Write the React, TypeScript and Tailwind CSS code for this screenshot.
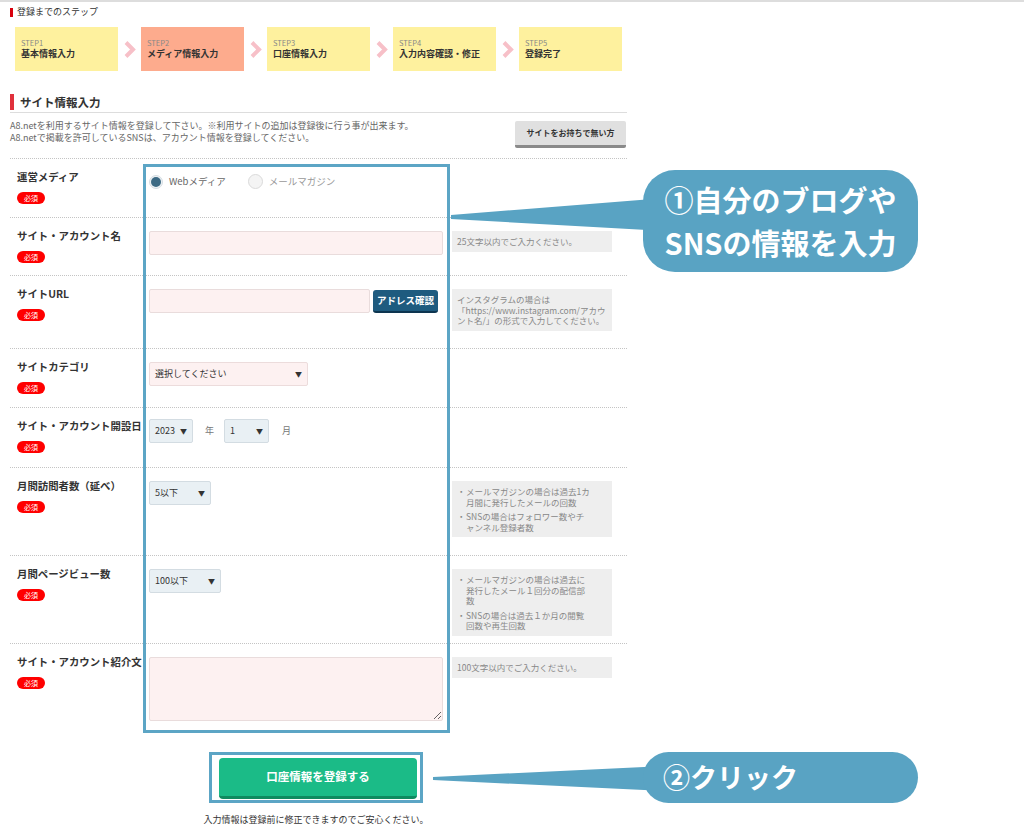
import React from "react";

const Badge = () => (
  <div className="mt-[7px] flex h-[12px] w-[28px] items-center justify-center rounded-full bg-[#ff0000] text-[7px] leading-none text-white">
    必須
  </div>
);

function Row({
  label,
  hClass,
  children,
  note,
  contentClass = "pt-[13px]",
}: {
  label: string;
  hClass: string;
  children?: React.ReactNode;
  note?: React.ReactNode;
  contentClass?: string;
}) {
  return (
    <div className={`flex border-t border-dotted border-[#c4c4c4] ${hClass}`}>
      <div className="w-[139px] shrink-0 pl-[7px] pt-[10px]">
        <div className="whitespace-nowrap text-[10.4px] font-bold leading-[16px] text-[#333]">{label}</div>
        <Badge />
      </div>
      <div className={`w-[303px] shrink-0 ${contentClass}`}>{children}</div>
      {note && <div className="w-[160px] shrink-0 pt-[13px]">{note}</div>}
    </div>
  );
}

const Note = ({ children }: { children: React.ReactNode }) => (
  <div className="bg-[#eeeeee] px-[5px] py-[5px] text-[8.5px] leading-[10.5px] text-[#888]">{children}</div>
);

const Bullet = ({ children }: { children: React.ReactNode }) => (
  <div className="flex">
    <span className="w-[9px] shrink-0">・</span>
    <span>{children}</span>
  </div>
);

const Select = ({ w, pink, children }: { w: string; pink?: boolean; children: React.ReactNode }) => (
  <div
    className={`flex h-[24px] items-center justify-between rounded-[2px] border px-[5px] text-[9px] text-[#333] ${w} ${
      pink ? "border-[#ecdcdc] bg-[#fdf1f1]" : "border-[#d3dce2] bg-[#e9f0f4]"
    }`}
  >
    <span>{children}</span>
    <span className="text-[7px]">▼</span>
  </div>
);

const Chevron = () => (
  <div className="flex w-[23px] items-center justify-center">
    <svg width="12" height="17" viewBox="0 0 12 17">
      <polyline points="2,1.5 9,8.5 2,15.5" fill="none" stroke="#f7c0c8" strokeWidth="4" />
    </svg>
  </div>
);

const Step = ({ n, name, active }: { n: number; name: string; active?: boolean }) => (
  <div
    className={`flex h-[44px] w-[103px] flex-col justify-center pl-[6px] ${active ? "bg-[#fdab8d]" : "bg-[#fef19e]"}`}
  >
    <div className="text-[7.5px] leading-[10px] text-[#888]">STEP{n}</div>
    <div className="text-[9px] font-bold leading-[12px] text-[#333]">{name}</div>
  </div>
);

export default function App() {
  return (
    <div className="relative h-[835px] w-[1024px] overflow-hidden bg-white font-[family-name:'Noto_Sans_CJK_JP',sans-serif]">
      <div className="h-[2px] w-full bg-[#dddddd]" />
      <div className="w-[627px] pl-[10px]">
        {/* steps */}
        <div className="mt-[4px] flex items-center gap-[4px]">
          <div className="h-[9px] w-[3px] bg-[#d9000d]" />
          <div className="text-[9px] leading-[12px] text-[#333]">登録までのステップ</div>
        </div>
        <div className="mt-[9px] flex pl-[5px]">
          <Step n={1} name="基本情報入力" />
          <Chevron />
          <Step n={2} name="メディア情報入力" active />
          <Chevron />
          <Step n={3} name="口座情報入力" />
          <Chevron />
          <Step n={4} name="入力内容確認・修正" />
          <Chevron />
          <Step n={5} name="登録完了" />
        </div>

        {/* heading */}
        <div className="mt-[23px] border-b border-[#dddddd] pb-[2px]">
          <div className="flex items-center gap-[6px]">
            <div className="h-[16px] w-[4px] bg-[#e0313c]" />
            <div className="text-[11.5px] font-bold leading-[16px] text-[#333]">サイト情報入力</div>
          </div>
        </div>
        <div className="flex h-[45px] items-start justify-between">
          <div className="mt-[7px] text-[9px] leading-[12px] text-[#666]">
            <div>A8.netを利用するサイト情報を登録して下さい。※利用サイトの追加は登録後に行う事が出来ます。</div>
            <div>A8.netで掲載を許可しているSNSは、アカウント情報を登録してください。</div>
          </div>
          <div className="mr-[1px] mt-[8px] flex h-[27px] w-[111px] items-center justify-center rounded-[2px] border-b-[3px] border-[#8a8a8a] bg-[#e0e0e0] text-[8px] font-bold text-[#333]">
            サイトをお持ちで無い方
          </div>
        </div>

        {/* form rows */}
        <Row label="運営メディア" hClass="h-[59px]" contentClass="pt-[15px]">
          <div className="flex items-center gap-[22px]">
            <div className="flex items-center gap-[6px]">
              <span className="flex h-[14px] w-[14px] items-center justify-center rounded-full border border-[#d5dde2] bg-[#eef2f5]">
                <span className="h-[10px] w-[10px] rounded-full bg-[#3c6a84]" />
              </span>
              <span className="text-[9.5px] text-[#666]">Webメディア</span>
            </div>
            <div className="flex items-center gap-[6px]">
              <span className="h-[15px] w-[15px] rounded-full border border-[#dadada] bg-[#f4f4f4]" />
              <span className="text-[9.5px] text-[#999]">メールマガジン</span>
            </div>
          </div>
        </Row>
        <Row
          label="サイト・アカウント名"
          hClass="h-[58px]"
          note={<Note>25文字以内でご入力ください。</Note>}
        >
          <input className="h-[24px] w-[294px] rounded-[2px] border border-[#e9dcdc] bg-[#fdf1f1] outline-none" />
        </Row>
        <Row
          label="サイトURL"
          hClass="h-[73px]"
          note={
            <Note>
              インスタグラムの場合は
              <br />
              「https://www.instagram.com/アカウ
              <br />
              ント名/」の形式で入力してください。
            </Note>
          }
        >
          <div className="flex items-center">
            <input className="h-[24px] w-[221px] rounded-[2px] border border-[#e9dcdc] bg-[#fdf1f1] outline-none" />
            <div className="ml-[3px] flex h-[23px] w-[65px] items-center justify-center rounded-[3px] border-b-2 border-[#0d3550] bg-[#1e5b7f] text-[9.5px] font-bold text-white">
              アドレス確認
            </div>
          </div>
        </Row>
        <Row label="サイトカテゴリ" hClass="h-[59px]">
          <Select w="w-[159px]" pink>
            選択してください
          </Select>
        </Row>
        <Row label="サイト・アカウント開設日" hClass="h-[60px]" contentClass="pt-[11px]">
          <div className="flex items-center">
            <Select w="w-[44px]">2023</Select>
            <span className="ml-[12px] text-[9px] text-[#777]">年</span>
            <div className="ml-[10px]">
              <Select w="w-[45px]">1</Select>
            </div>
            <span className="ml-[13px] text-[9px] text-[#777]">月</span>
          </div>
        </Row>
        <Row
          label="月間訪問者数（延べ）"
          hClass="h-[88px]"
          note={
            <Note>
              <Bullet>
                メールマガジンの場合は過去1カ
                <br />
                月間に発行したメールの回数
              </Bullet>
              <div className="h-[4px]" />
              <Bullet>
                SNSの場合はフォロワー数やチ
                <br />
                ャンネル登録者数
              </Bullet>
            </Note>
          }
        >
          <Select w="w-[62px]">5以下</Select>
        </Row>
        <Row
          label="月間ページビュー数"
          hClass="h-[88px]"
          note={
            <Note>
              <Bullet>
                メールマガジンの場合は過去に
                <br />
                発行したメール１回分の配信部
                <br />
                数
              </Bullet>
              <div className="h-[4px]" />
              <Bullet>
                SNSの場合は過去１か月の閲覧
                <br />
                回数や再生回数
              </Bullet>
            </Note>
          }
        >
          <Select w="w-[72px]">100以下</Select>
        </Row>
        <Row
          label="サイト・アカウント紹介文"
          hClass="h-[90px]"
          note={<Note>100文字以内でご入力ください。</Note>}
        >
          <textarea className="block h-[64px] w-[294px] rounded-[2px] border border-[#e9dcdc] bg-[#fdf1f1] outline-none" />
        </Row>

        {/* submit */}
        <div className="mt-[19px] flex w-[612px] flex-col items-center">
          <div className="h-[51px] w-[214px] border-[3px] border-[#5ca5c5] px-[7px] pt-[3px]">
            <div className="flex h-[41px] w-[198px] items-center justify-center rounded-[4px] border-b-[3px] border-[#0f8a5f] bg-[#1bbb87] text-[11.5px] font-bold text-white">
              口座情報を登録する
            </div>
          </div>
          <div className="mt-[10px] text-[9px] leading-[14px] text-[#333]">
            入力情報は登録前に修正できますのでご安心ください。
          </div>
        </div>
      </div>

      {/* overlays */}
      <div className="pointer-events-none absolute left-[143px] top-[164px] h-[569px] w-[307px] border-[3px] border-[#5ca5c5]" />
      <svg className="pointer-events-none absolute left-0 top-0" width="1024" height="835">
        <polygon points="451,215 451,219 665,231 665,198" fill="#59a3c3" />
        <polygon points="433,777 433,780 665,791 665,766" fill="#59a3c3" />
      </svg>
      <div className="absolute left-[643px] top-[170px] flex h-[102px] w-[275px] flex-col items-center justify-center rounded-[32px] bg-[#59a3c3] text-[29px] font-bold leading-[43px] text-white">
        <div>①自分のブログや</div>
        <div>SNSの情報を入力</div>
      </div>
      <div className="absolute left-[643px] top-[752px] flex h-[51px] w-[275px] items-center rounded-full bg-[#59a3c3] pl-[20px] text-[27px] font-bold text-white">
        ②クリック
      </div>
    </div>
  );
}
